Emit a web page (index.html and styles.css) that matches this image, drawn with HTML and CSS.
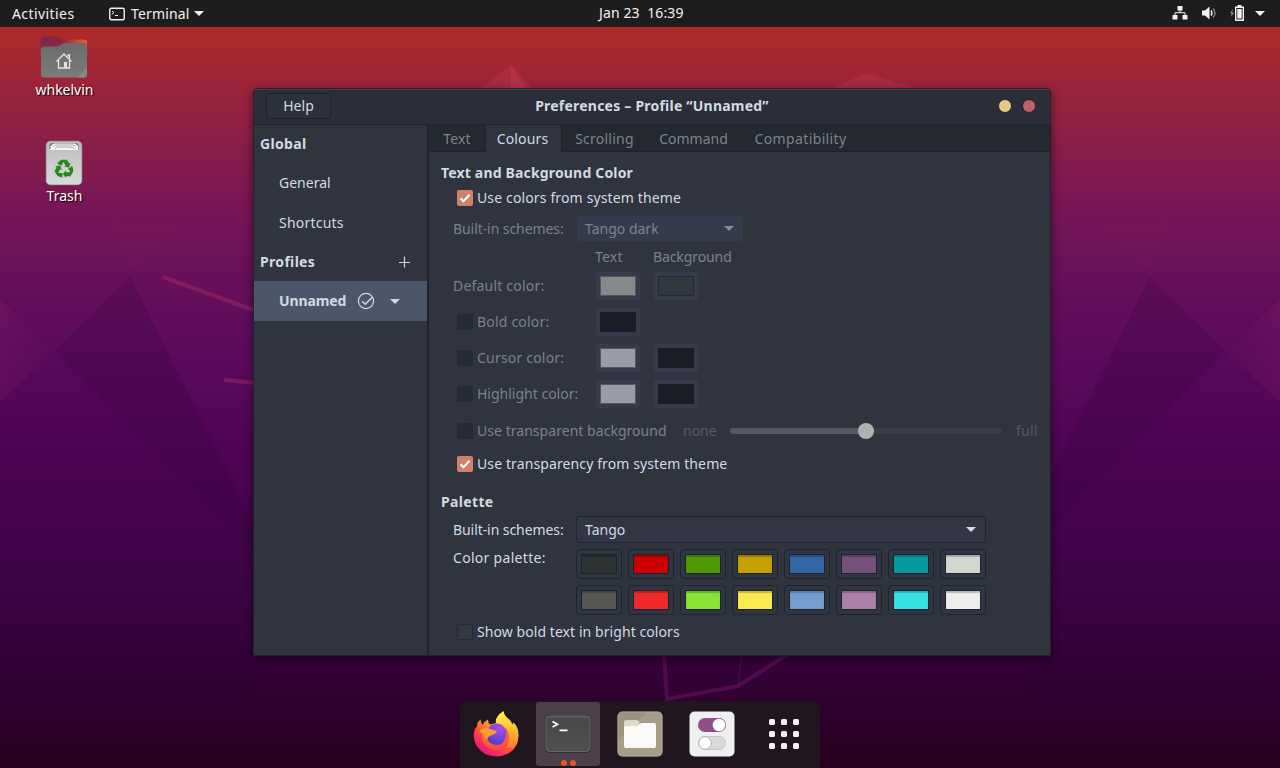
FILE: index.html
```html
<!DOCTYPE html>
<html lang="en">
<head>
<meta charset="utf-8">
<title>Terminal Preferences</title>
<link rel="stylesheet" href="styles.css">
</head>
<body>
<div class="desktop">
  <svg class="wallpaper" width="1280" height="768" viewBox="0 0 1280 768" aria-hidden="true">
    <defs>
      <linearGradient id="wl" x1="0" y1="0" x2="1" y2="0"><stop offset="0" stop-color="#a03080" stop-opacity=".13"/><stop offset="1" stop-color="#a03080" stop-opacity="0"/></linearGradient>
      <g id="facets">
        <path d="M54 352L130 277L254 525V552Z" fill="#1c0035" fill-opacity=".15"/>
        <path d="M0 300L54 352L0 402Z" fill="url(#wl)"/>
        <path d="M108 222L180 224L133 270Z" fill="#ff5aa0" fill-opacity=".025"/>
        <path d="M0 402L54 352L254 552V700L0 700Z" fill="#1c0035" fill-opacity=".04"/>
      </g>
    </defs>
    <use href="#facets"/>
    <use href="#facets" transform="translate(1280 0) scale(-1 1)"/>
    <g fill="#ff5a7a" fill-opacity=".13">
      <path d="M478 90L511 65L533 90Z"/><path d="M829 90L865 73L922 90Z"/><path d="M511 65L511 90L526 90Z"/>
    </g>
    <g stroke="#a02a66" stroke-opacity=".5" stroke-width="4" fill="none">
      <path d="M163 277L256 311"/><path d="M224 380L256 383"/>
    </g>
    <path d="M664 654L667 699L738 686L788 654" stroke="#6b1268" stroke-opacity=".55" stroke-width="4" fill="none"/>
    <path d="M742 654L738 686" stroke="#6b1268" stroke-opacity=".5" fill="none"/>
  </svg>

  <header class="topbar">
    <span class="activities">Activities</span>
    <span class="appmenu">
      <svg width="16" height="14" viewBox="0 0 16 14" fill="none" stroke="#f2f2f2"><rect x=".75" y="1.25" width="14.5" height="11.5" rx="1.5" stroke-width="1.4"/><path d="M3 4l2 1.6L3 7.2M6 8.5h3"/></svg>
      <span class="t-term">Terminal</span>
      <i class="tri white"></i>
    </span>
    <span class="clock">Jan 23&nbsp; 16:39</span>
    <span class="tray">
      <svg width="16" height="14" viewBox="0 0 16 14" fill="#f2f2f2"><path d="M5.500 0h5v4.500h-5zM.5 9h5v4.500h-5zM10.500 9h5v4.500h-5z"/><path d="M8 4v3M3 9.500V6.700h10v2.800" stroke="#f2f2f2" fill="none"/></svg>
      <svg class="vol" width="15" height="14" viewBox="0 0 15 14"><path d="M0 4.500h3l4.500-4v13l-4.500-4H0z" fill="#f2f2f2"/><path d="M9 4.500q2 2.500 0 5" stroke="#f2f2f2" stroke-width="1.400" fill="none"/><path d="M11 2.500q4 4.500 0 9" stroke="#8b8b8b" stroke-width="1.300" fill="none"/></svg>
      <svg class="bat" width="16" height="16" viewBox="0 0 16 16"><path d="M4 4L1 8.500h1.800L2 12l3-4.500H3z" fill="#999"/><path d="M6.700 2.200h7.600v13H6.700zM8.500.7h4" stroke="#f2f2f2" stroke-width="1.400" fill="none"/><path d="M8.300 4h4.400v9.500H8.300z" fill="#f2f2f2"/></svg>
      <i class="tri white"></i>
    </span>
  </header>

  <div class="icons">
    <div class="dicon">
      <svg width="48" height="44" viewBox="0 0 48 44">
        <defs><linearGradient id="fb" x1="0" x2="1" y1="0" y2="0"><stop offset="0" stop-color="#772953"/><stop offset=".45" stop-color="#92243f"/><stop offset="1" stop-color="#f0602a"/></linearGradient>
        <linearGradient id="ff" x1="0" x2="0" y1="0" y2="1"><stop offset="0" stop-color="#6b6b6b"/><stop offset="1" stop-color="#7b7b7b"/></linearGradient></defs>
        <path d="M1 15V3.500q0-3 3-3h13q2 0 3 1l2 2h22q3 0 3 3v10H1z" fill="url(#fb)"/>
        <path d="M1 13.500q0-3 3-3h13q2 0 3-1l2-1.500q1-1 3-1h19q3 0 3 3v28.500q0 3-3 3H4q-3 0-3-3z" fill="url(#ff)"/>
        <path d="M47 32v6.500q0 3-3 3h-8z" fill="#858585"/>
        <path d="M16.500 25.500L24 18L31.500 25.500M18.500 24v8h11V24M28 20.500v-1.500h1.500V22.500" stroke="#e4e4e4" stroke-width="1.300" fill="none"/><path d="M24 26h3v6h-3z" fill="#e4e4e4"/>
      </svg>
      <span class="t-home">whkelvin</span>
    </div>
    <div class="dicon trash">
      <svg width="38" height="46" viewBox="0 0 38 46">
        <defs><linearGradient id="tb" x1="0" x2="0" y1="0" y2="1"><stop offset="0" stop-color="#bdbdbd"/><stop offset="1" stop-color="#dadada"/></linearGradient></defs>
        <rect x="1" y="1" width="36" height="44" rx="4.500" fill="url(#tb)" stroke="#777" stroke-opacity=".7"/>
        <path d="M4.500 9V5.500q0-2.500 2.500-2.500h24q2.500 0 2.500 2.500V9" fill="#777"/>
        <path d="M5.500 10V6L9 3.500h21L33 6v4z" fill="#f7f7f7"/><path d="M8 7q1-2 4-2h14q4 0 5 2M10 9q0-2 3-2h11q4 0 6 2" stroke="#aaa" fill="none"/>
        <g fill="#26881f"><g id="arrow"><path d="M14 21.500L16.500 19.800H22L24.200 23.500L25.800 22.600L24 27.500L19 26.600L20.700 25.500L18.500 22L16.400 25.700L12.300 23.400Z"/></g>
        <use href="#arrow" transform="rotate(120 19 29)"/><use href="#arrow" transform="rotate(240 19 29)"/></g>
      </svg>
      <span class="t-trash">Trash</span>
    </div>
  </div>

  <main class="window">
    <div class="titlebar">
      <button class="help">Help</button>
      <h1>Preferences – Profile “Unnamed”</h1>
      <span class="wbtns"><i class="min"></i><i class="close"></i></span>
    </div>
    <div class="body">
      <nav class="side">
        <div class="srow group">Global</div>
        <div class="srow item">General</div>
        <div class="srow item short">Shortcuts</div>
        <div class="srow group"><span class="grow">Profiles</span><svg width="12" height="12" viewBox="0 0 12 12" stroke="#d3dae3" stroke-width="1.200"><path d="M6.500 .5v11M1 6.500h11"/></svg></div>
        <div class="srow item sel"><span>Unnamed</span>
          <svg width="18" height="18" viewBox="0 0 18 18" fill="none" stroke="#d3dae3"><circle cx="9" cy="9" r="7.600" stroke-width="1.200"/><path d="M5 9.200l3.200 3L15 5.500" stroke-width="1.500"/></svg>
          <i class="tri"></i></div>
      </nav>
      <section class="pane">
        <div class="tabs"><span class="tab t1">Text</span><span class="tab on">Colours</span><span class="tab t3">Scrolling</span><span class="tab t4">Command</span><span class="tab t5">Compatibility</span></div>
        <div class="content">
          <h2>Text and Background Color</h2>
          <div class="row sys"><i class="cb on"><svg width="16" height="16" viewBox="0 0 16 16"><path d="M3.500 8.200l3 3L12.500 4.800" stroke="#fff" stroke-width="2" fill="none"/></svg></i><span class="t-sys1">Use colors from system theme</span></div>
          <div class="row scheme dim"><span class="lab t-bs">Built-in schemes:</span><div class="combo off"><span>Tango dark</span><i class="tri"></i></div></div>
          <div class="row heads dim"><span class="h-text">Text</span><span class="h-bg">Background</span></div>
          <div class="row crow dim"><span class="lab t-def">Default color:</span><b class="cbtn"><i class="sw lightgreen"></i></b><b class="cbtn"><i class="sw slate"></i></b></div>
          <div class="row crow dim"><span class="lab chk"><i class="cb off"></i><span class="t-def">Bold color:</span></span><b class="cbtn"><i class="sw black"></i></b></div>
          <div class="row crow dim"><span class="lab chk"><i class="cb off"></i><span class="t-def">Cursor color:</span></span><b class="cbtn"><i class="sw grey"></i></b><b class="cbtn"><i class="sw black"></i></b></div>
          <div class="row crow dim"><span class="lab chk"><i class="cb off"></i><span>Highlight color:</span></span><b class="cbtn"><i class="sw grey"></i></b><b class="cbtn"><i class="sw black"></i></b></div>
          <div class="row trans dim"><i class="cb off"></i><span class="t-tr">Use transparent background</span><span class="t-none">none</span><div class="slider"><div class="fill"></div><i class="knob"></i></div><span class="t-full">full</span></div>
          <div class="row sys2"><i class="cb on"><svg width="16" height="16" viewBox="0 0 16 16"><path d="M3.500 8.200l3 3L12.500 4.800" stroke="#fff" stroke-width="2" fill="none"/></svg></i><span class="t-sys2">Use transparency from system theme</span></div>
          <h2 class="pal">Palette</h2>
          <div class="row scheme2"><span class="lab t-bs">Built-in schemes:</span><div class="combo wide"><span>Tango</span><i class="tri"></i></div></div>
          <div class="palette"><span class="lab t-cp">Color palette:</span>
            <div class="grid">
              <b><i class="c0"></i></b><b><i class="c1"></i></b><b><i class="c2"></i></b><b><i class="c3"></i></b><b><i class="c4"></i></b><b><i class="c5"></i></b><b><i class="c6"></i></b><b><i class="c7"></i></b>
              <b><i class="c8"></i></b><b><i class="c9"></i></b><b><i class="c10"></i></b><b><i class="c11"></i></b><b><i class="c12"></i></b><b><i class="c13"></i></b><b><i class="c14"></i></b><b><i class="c15"></i></b>
            </div>
          </div>
          <div class="row bright"><i class="cb empty"></i><span class="t-br">Show bold text in bright colors</span></div>
        </div>
      </section>
    </div>
  </main>

  <footer class="dock">
    <div class="app">
      <svg width="48" height="48" viewBox="0 0 48 48">
        <defs>
          <linearGradient id="fx1" x1=".8" y1=".1" x2=".25" y2=".95"><stop offset="0" stop-color="#fff04a"/><stop offset=".35" stop-color="#ffa52a"/><stop offset=".62" stop-color="#ff5036"/><stop offset="1" stop-color="#e5177b"/></linearGradient>
          <linearGradient id="fx2" x1=".5" y1="0" x2=".6" y2="1"><stop offset="0" stop-color="#fff44f"/><stop offset=".5" stop-color="#ffc12e"/><stop offset="1" stop-color="#ff7a2c"/></linearGradient>
          <radialGradient id="fx3" cx=".7" cy=".2" r=".8"><stop offset="0" stop-color="#b04be0"/><stop offset=".6" stop-color="#7248e0"/><stop offset="1" stop-color="#5a3bc0"/></radialGradient>
          <linearGradient id="fx4" x1="0" y1="0" x2=".2" y2="1"><stop offset="0" stop-color="#ff8a2c"/><stop offset="1" stop-color="#ff4a45"/></linearGradient>
        </defs>
        <path d="M8.500 9.500Q9 13 10.500 15Q12 11.500 16 9.500Q16 13 18 14.500L24 13L29 13Q26 7 31 1.500Q33 7 38 10L41 15L41.500 12.500Q47 18 46.500 26Q46 38 36.500 43.500Q25 49 13 44Q2 37 1.700 26Q1.700 19 5 16.500L5.300 13Q7 10.500 8.500 9.500Z" fill="url(#fx1)"/>
        <path d="M24 13Q22.500 7 31.500 1Q32.500 7 37.500 11L41 16L41.500 12.500Q47 19 45.500 28Q42 38 34 38Q41 29 36 21Q31 13 24 13Z" fill="url(#fx2)"/>
        <path d="M8 20Q14 17 19 18Q26 12 34 18Q38 23 37 29Q35 40 24 40Q12 39 10 28Q10 23 8 20Z" fill="url(#fx4)"/>
        <path d="M16 21Q17 14 25 13.500Q31 14 32 18Q35 20 34 26Q32 34.500 25 35Q16.500 34.500 14.500 27Z" fill="url(#fx3)"/>
        <path d="M7 21Q13 16.500 18 19Q24.500 20.500 25 21.500Q22.500 25 18.500 25.500Q15.500 27 14.500 30Q11 27 11.500 23Q9 23 7 21Z" fill="#ff9a2e"/>
      </svg>
    </div>
    <div class="app active">
      <svg width="48" height="40" viewBox="0 0 48 40"><defs><linearGradient id="tg" x1="0" y1="0" x2="0" y2="1"><stop offset="0" stop-color="#575757"/><stop offset=".1" stop-color="#484848"/><stop offset="1" stop-color="#505050"/></linearGradient></defs>
      <rect x="1" y="1" width="46" height="38" rx="4.500" fill="#2e2e2e"/><rect x="2" y="2" width="44" height="35.500" rx="3.500" fill="url(#tg)" stroke="#757575" stroke-width=".8"/><path d="M8.500 7.500l5 2.800l-5 2.800M15.500 16.300h8" stroke="#fff" stroke-width="1.700" fill="none"/></svg>
      <span class="dots"><i></i><i></i></span>
    </div>
    <div class="app">
      <svg width="46" height="46" viewBox="0 0 46 46"><rect x=".5" y=".5" width="45" height="45" rx="5" fill="#9c927e"/><path d="M30 1h11q4 0 4 4v36q0 4-4 4H5q-4 0-4-4V29z" fill="#a69d89"/><rect x="1" y="1" width="44" height="44" rx="4.500" fill="none" stroke="#c0b8a5" stroke-opacity=".6"/><path d="M7 20v-9q0-2 2-2h10q2 0 3 1.500l1 1.500h-1v8z" fill="#dcd8ca"/><path d="M7 16.500q0-1.500 2-1.500h10q2 0 3-1.500q1-1.500 3-1.500h12q2 0 2 2v21q0 2-2 2H9q-2 0-2-2z" fill="#faf9f7"/></svg>
    </div>
    <div class="app">
      <svg width="46" height="46" viewBox="0 0 46 46"><rect x=".5" y=".5" width="45" height="45" rx="5" fill="#efeff0"/><rect x="9" y="7" width="28" height="14" rx="7" fill="#924d8b"/><circle cx="30" cy="14" r="6.300" fill="#fff"/><rect x="9.500" y="25.500" width="27" height="13" rx="6.500" fill="#dadada" stroke="#c6c6c6"/><circle cx="16" cy="32" r="6.300" fill="#fff" stroke="#aaa" stroke-width=".9"/></svg>
    </div>
    <div class="app">
      <svg width="32" height="32" viewBox="0 0 32 32" fill="#f2f2f2"><g id="r"><rect x="1" y="1" width="6" height="6" rx="1.500"/><rect x="13" y="1" width="6" height="6" rx="1.500"/><rect x="25" y="1" width="6" height="6" rx="1.500"/></g><use href="#r" y="12"/><use href="#r" y="24"/></svg>
    </div>
  </footer>
</div>
</body>
</html>
```
FILE: styles.css
```css
* { box-sizing: border-box; }
body { margin: 0; font: 14px/18px "Noto Sans", "Open Sans", sans-serif; color: #d3dae3; }
.desktop { position: relative; width: 1280px; height: 768px; overflow: hidden;
  background: linear-gradient(180deg, #ae2a27 27px, #9d2439 82px, #8b1e47 140px, #781655 205px, #69105b 270px, #5c0a5b 350px, #500554 450px, #42044a 560px, #36023a 660px, #27001e 768px); }
.wallpaper { position: absolute; left: 0; top: 0; }
.tri { width: 0; height: 0; border: 5px solid transparent; border-top-color: #d3dae3; border-bottom: 0; }
.tri.white { border-top-color: #f2f2f2; }

.topbar { position: relative; display: flex; align-items: center; height: 27px; padding: 0 15px 0 12px; background: #1d1d1d; color: #f2f2f2; }
.activities { width: 97px; letter-spacing: .42px; }
.appmenu { display: flex; align-items: center; gap: 6px; width: 490px; }
.t-term { width: 58px; letter-spacing: .15px; }
.appmenu .tri { margin-left: -1px; }
.clock { width: 86px; white-space: nowrap; letter-spacing: .12px; margin-top: -1px; }
.tray { display: flex; flex: 1; justify-content: flex-end; align-items: center; margin-top: -1px; }
.vol { margin-left: 14px; }
.bat { margin: 0 10px 0 12px; }

.icons { position: absolute; left: 14px; top: 36px; width: 100px; display: flex; flex-direction: column; }
.dicon { display: flex; flex-direction: column; align-items: center; height: 104px; color: #fff; text-shadow: 1px 1px 1px #000; }
.dicon span { margin: 1px 0 0 1px; }

.window { position: absolute; left: 253px; top: 88px; width: 798px; height: 568px; border: 1px solid #1d222b; border-radius: 5px 5px 0 0; background: #2f343f; box-shadow: 0 3px 10px 1px rgba(0,0,0,.4); overflow: hidden; }
.titlebar { display: flex; align-items: center; height: 36px; padding: 0 14px 2px 12px; background: #2b2e39; border-top: 1px solid #3d4450; border-bottom: 1px solid #20242c; }
.help { width: 65px; height: 26px; padding: 0; border: 1px solid #1f232b; border-radius: 4px; background: #2d313c; color: #d3dae3; font: inherit; }
h1, h2 { margin: 0; font-size: 14px; line-height: 18px; font-weight: 700; letter-spacing: .17px; }
h1 { flex: 1; text-align: center; padding-right: 25px; letter-spacing: .22px; }
.wbtns { display: flex; gap: 10px; }
.wbtns i { width: 14px; height: 14px; border-radius: 50%; background: #e8c887; border: .5px solid #1f232b; }
.wbtns .close { background: #bf616a; }
.body { display: flex; height: 531px; }
.side { width: 175px; border-right: 2px solid #20242d; }
.srow { display: flex; align-items: center; height: 39px; padding: 0 17px 0 6px; }
.srow:first-child { height: 38px; }
.srow:nth-child(3) { height: 40px; }
.group, .sel { font-weight: 700; }
.group { letter-spacing: .32px; }
.grow { flex: 1; }
.item { padding-left: 25px; }
.short { padding-top: 1px; letter-spacing: .22px; }
.sel { height: 40px; background: #4b5669; gap: 11px; }
.sel span { width: 67px; letter-spacing: -.1px; }
.sel .tri { margin-left: 4px; }
.pane { flex: 1; }
.tabs { display: flex; height: 27px; background: #242830; border-bottom: 1px solid #1d2129; }
.tab { display: flex; align-items: center; justify-content: center; color: #7d838e; padding-top: 1px; }
.t1 { width: 56px; letter-spacing: .2px; }
.tab.on { width: 77px; height: 27px; padding-right: 2px; background: #2f343f; color: #d3dae3; border: solid #1d2129; border-width: 0 1px; letter-spacing: .15px; }
.t3 { width: 85px; letter-spacing: .25px; } .t4 { width: 93px; } .t5 { width: 121px; letter-spacing: .38px; }

.content { padding: 12px 12px 0; }
.row { display: flex; align-items: center; white-space: nowrap; }
.dim { color: #7c828d; }
.lab { flex: none; width: 124px; white-space: nowrap; }
.cb { flex: none; width: 16px; height: 16px; margin-right: 4px; border-radius: 2px; }
.cb svg { display: block; }
.cb.on { background: #cf8169; }
.cb.off { background: #262a33; }
.cb.empty { background: #343841; border: 1px solid #262a33; }
.sys { height: 20px; margin: 6px 0 8px; padding-left: 16px; }
.t-sys1 { letter-spacing: .14px; }
.t-sys2 { letter-spacing: .11px; }
.t-bs { letter-spacing: -.07px; }
.t-def { letter-spacing: .2px; }
.t-cp { letter-spacing: .3px; }
.t-br { letter-spacing: .07px; }
.scheme { height: 25px; padding-left: 12px; }
.combo { display: flex; align-items: center; justify-content: space-between; width: 166px; height: 25px; padding: 0 9px 0 8px; border-radius: 3px; }
.combo.off { background: #363b4b; }
.off .tri { border-top-color: #858b98; }
.heads { height: 18px; margin: 7px 0 2px; padding-left: 154px; }
.h-text { width: 58px; letter-spacing: .2px; }
.h-bg { letter-spacing: -.1px; }
.crow { height: 36px; padding-left: 12px; gap: 14px; }
.crow .lab { width: 129px; display: flex; align-items: center; }
.crow .chk { padding-left: 4px; }
.cbtn { width: 44px; height: 28px; padding: 4px; border-radius: 3px; background: #363a4a; }
.sw { display: block; width: 36px; height: 20px; border: 1px solid #55575c; }
.lightgreen { background: #85898b; } .slate { background: #31373f; border-color: #24282f; }
.black { background: #1c1e27; border-color: #1c1e27; } .grey { background: #999ca6; }
.trans { height: 36px; margin-top: 1px; padding-left: 16px; }
.t-tr { width: 206px; letter-spacing: .04px; } .t-none { width: 47px; color: #565c67; } .t-full { color: #565c67; letter-spacing: .3px; }
.slider { position: relative; width: 272px; height: 6px; margin-right: 14px; border-radius: 3px; background: #3a3e48; }
.fill { width: 50%; height: 6px; border-radius: 3px; background: #565a64; }
.knob { position: absolute; left: 128px; top: -5px; width: 16px; height: 16px; border-radius: 50%; background: #b1b1b1; }
.sys2 { height: 20px; margin-top: 5px; padding-left: 16px; }
.pal { margin: 19px 0 5px; letter-spacing: .35px; }
.scheme2 { height: 27px; padding-left: 12px; }
.wide { width: 410px; height: 27px; margin-left: -1px; border: 1px solid #20242d; background: #323644; }
.palette { display: flex; padding: 6px 0 0 12px; }
.palette .lab { width: 123px; }
.grid { display: grid; grid-template-columns: repeat(8, 46px); gap: 6px; }
.grid b { height: 30px; padding: 4px; border: 1px solid #20242d; border-radius: 4px; background: #303543; }
.grid i { display: block; width: 36px; height: 20px; border: 1px solid #1e222a; box-shadow: inset 0 2px 1px rgba(0,0,0,.22); }
.c0 { background: #2e3436; } .c1 { background: #cc0000; } .c2 { background: #4e9a06; } .c3 { background: #c4a000; }
.c4 { background: #3465a4; } .c5 { background: #75507b; } .c6 { background: #06989a; } .c7 { background: #d3d7cf; }
.c8 { background: #555753; } .c9 { background: #ef2929; } .c10 { background: #8ae234; } .c11 { background: #fce94f; }
.c12 { background: #729fcf; } .c13 { background: #ad7fa8; } .c14 { background: #34e2e2; } .c15 { background: #eeeeec; }
.bright { height: 20px; margin-top: 7px; padding-left: 16px; }

.dock { position: absolute; left: 460px; top: 701px; width: 360px; height: 67px; display: flex; justify-content: space-between; padding: 1px 4px 2px; background: #21151f; border-radius: 7px 7px 0 0; }
.app { position: relative; width: 64px; height: 64px; display: flex; align-items: center; justify-content: center; }
.active { background: #4c3f49; border-radius: 3px; }
.dots { position: absolute; bottom: 0; left: 25px; display: flex; gap: 3px; }
.dots i { width: 6px; height: 6px; border-radius: 50%; background: #e95420; }
```
